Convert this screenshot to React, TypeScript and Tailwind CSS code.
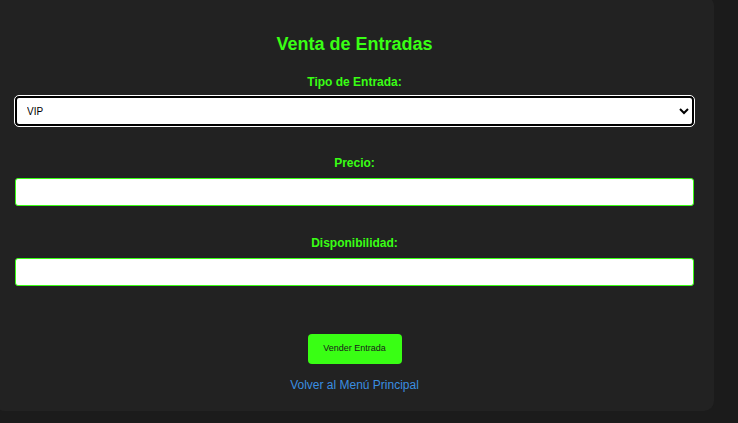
import { useState } from "react";

export default function App() {
  const [tipo, setTipo] = useState("VIP");

  return (
    <div className="min-h-[423px] w-[738px] overflow-hidden bg-[#1b1b1b] font-['Liberation_Sans',Arial,sans-serif]">
      <div className="-ml-[5px] -mt-[4px] w-[719px] rounded-[10px] bg-[#222222] px-[20px] pb-[19px] pt-[37px]">
        <h2 className="text-center text-[18px] font-bold leading-[22px] text-[#39ff14]">Venta de Entradas</h2>

        <label className="mt-[20px] block text-center text-[12px] font-bold leading-[14px] text-[#39ff14]">
          Tipo de Entrada:
        </label>
        <select
          value={tipo}
          onChange={(e) => setTipo(e.target.value)}
          className="mt-[7px] block h-[30px] w-full rounded-[4px] border-2 border-black bg-white pl-[6px] pr-[2px] text-[10px] text-black outline-1 outline-white"
        >
          <option>VIP</option>
          <option>General</option>
          <option>Platea</option>
        </select>

        <label className="mt-[30px] block text-center text-[12px] font-bold leading-[14px] text-[#39ff14]">
          Precio:
        </label>
        <input
          type="text"
          className="mt-[8px] block h-[28px] w-full rounded-[3px] border border-[#39ff14] bg-white"
        />

        <label className="mt-[30px] block text-center text-[12px] font-bold leading-[14px] text-[#39ff14]">
          Disponibilidad:
        </label>
        <input
          type="text"
          className="mt-[8px] block h-[28px] w-full rounded-[3px] border border-[#39ff14] bg-white"
        />

        <div className="mt-[48px] flex flex-col items-center">
          <button className="h-[30px] w-[94px] rounded-[4px] bg-[#39ff14] text-[9px] text-[#1a1a1a]">
            Vender Entrada
          </button>
          <a href="#" className="mt-[14px] text-[12px] leading-[14px] text-[#3a8ee0]">
            Volver al Menú Principal
          </a>
        </div>
      </div>
    </div>
  );
}
